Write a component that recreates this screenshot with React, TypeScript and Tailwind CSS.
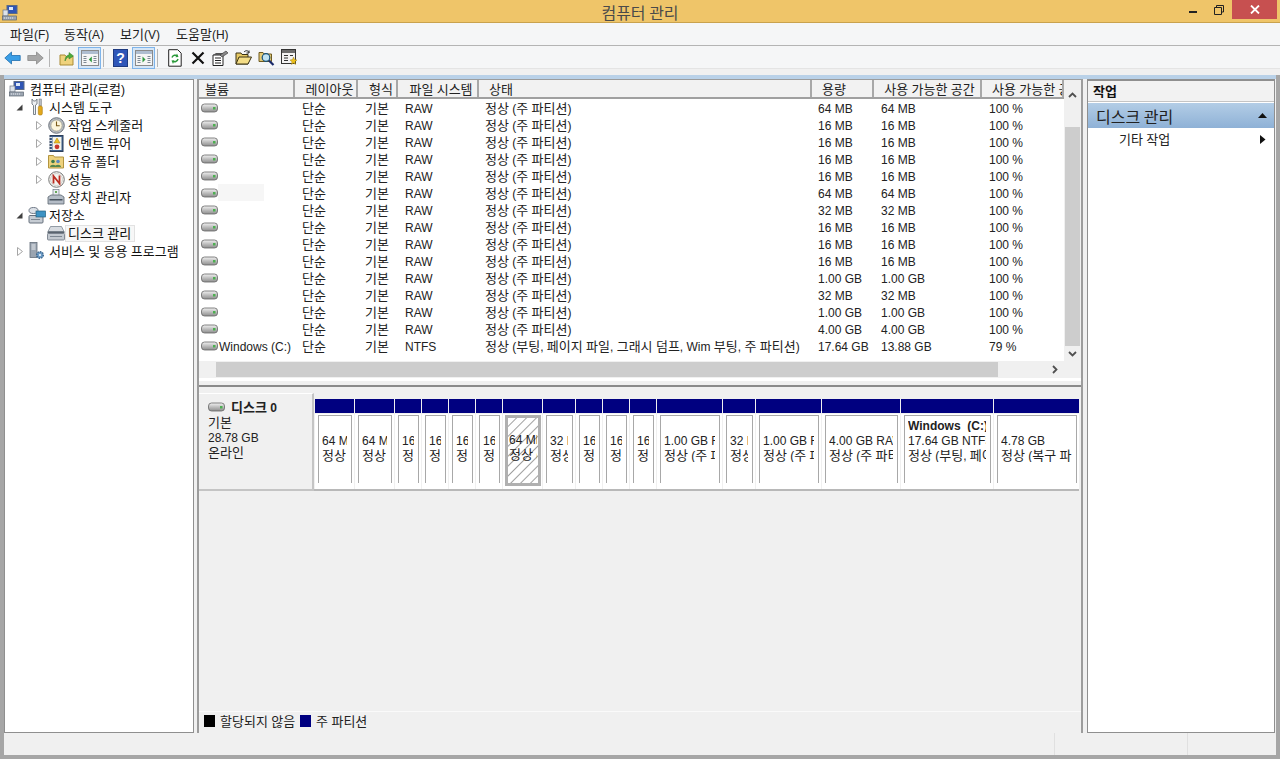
import React from "react";

const FONT = "font-['Liberation_Sans','Noto_Sans_CJK_KR',sans-serif]";

function T({ s, bold }: { s: string; bold?: boolean }) {
  const parts = s.split(/([\uAC00-\uD7A3]+)/).filter(Boolean);
  return (
    <span className="whitespace-pre">
      {parts.map((p, i) =>
        /[\uAC00-\uD7A3]/.test(p) ? (
          <span key={i} className={"text-[13px] font-['Noto_Sans_CJK_KR',sans-serif] " + (bold ? "font-bold" : "font-normal")}>{p}</span>
        ) : (
          <span key={i} className={"text-[12px] " + (bold ? "font-bold" : "font-normal")}>{p}</span>
        )
      )}
    </span>
  );
}

const Hdd = () => (
  <svg width="17" height="10" viewBox="0 0 17 10" className="shrink-0">
    <defs>
      <linearGradient id="hg" x1="0" y1="0" x2="0" y2="1">
        <stop offset="0" stopColor="#f2f2f2" />
        <stop offset="0.5" stopColor="#bdbdbd" />
        <stop offset="1" stopColor="#8e8e8e" />
      </linearGradient>
    </defs>
    <rect x="0.5" y="1" width="16" height="8" rx="3" fill="url(#hg)" stroke="#666" strokeWidth="0.8" />
    <rect x="12" y="4" width="2.5" height="2.5" fill="#4caf50" />
  </svg>
);

const Mmc = () => (
  <svg width="16" height="16" viewBox="0 0 16 16" className="shrink-0">
    <rect x="5" y="0.5" width="10" height="8" fill="#2f55b5" stroke="#5b6b85" />
    <rect x="7" y="2" width="4" height="3" fill="#dbe8fa" />
    <rect x="1" y="5" width="5" height="6" fill="#dde3ea" stroke="#6d7684" strokeWidth="0.7" />
    <rect x="0.5" y="11" width="14" height="4" fill="#9da6b2" stroke="#5b6470" strokeWidth="0.7" />
    <path d="M2 13h10" stroke="#e4e8ee" strokeDasharray="1 1" />
  </svg>
);

const Tools = () => (
  <svg width="16" height="18" viewBox="0 0 16 18" className="shrink-0">
    <path d="M3 1v5l1.500 1.500V16.500h2V7L8 6V1L6.500 3h-2z" fill="#eef1f4" stroke="#6e7780" strokeWidth="0.9" />
    <rect x="10" y="1" width="2.400" height="7" fill="#b8bdc2" stroke="#70757a" strokeWidth="0.5" />
    <rect x="9.300" y="8" width="4" height="9" rx="1.500" fill="#e3a81d" stroke="#a87808" strokeWidth="0.6" />
  </svg>
);

const Clock = () => (
  <svg width="17" height="17" viewBox="0 0 17 17" className="shrink-0">
    <circle cx="8.500" cy="8.500" r="7.800" fill="#b7bcc2" stroke="#6e747c" />
    <circle cx="8.500" cy="8.500" r="5.600" fill="#fdf6dc" stroke="#8d8d80" strokeWidth="0.6" />
    <path d="M8.500 4.500v4.200h3.200" fill="none" stroke="#7a5a18" strokeWidth="1.100" />
  </svg>
);

const EventLog = () => (
  <svg width="16" height="17" viewBox="0 0 16 17" className="shrink-0">
    <rect x="2" y="0.500" width="13" height="16" fill="#40628f" stroke="#2d3f58" />
    <rect x="4.500" y="2" width="9" height="13" fill="#f4f4ea" />
    <path d="M1 2.500h3M1 5.500h3M1 8.500h3M1 11.500h3M1 14.500h3" stroke="#d9dee5" />
    <path d="M9 3l3 5H6z" fill="#f0c020" stroke="#a17d10" strokeWidth="0.5" />
    <circle cx="9" cy="11.800" r="2.400" fill="#c8372d" />
  </svg>
);

const Share = () => (
  <svg width="16" height="16" viewBox="0 0 16 16" className="shrink-0">
    <path d="M0.500 2.500h5l1 1.500h9v11h-15z" fill="#eed27d" stroke="#b39540" />
    <circle cx="5" cy="8.500" r="1.800" fill="#3f7a4a" />
    <circle cx="10" cy="8.500" r="1.800" fill="#5b88c2" />
    <path d="M2 14c0-3 6-3 6 0zM7 14c0-3 6-3 6 0z" fill="#54864f" />
  </svg>
);

const Perf = () => (
  <svg width="17" height="17" viewBox="0 0 17 17" className="shrink-0">
    <circle cx="8.500" cy="8.500" r="7.800" fill="#f3f3ee" stroke="#777" />
    <circle cx="8.500" cy="8.500" r="6" fill="none" stroke="#bbb" strokeWidth="0.6" />
    <path d="M5.500 12.500V5l6 7.500V4.500" fill="none" stroke="#bb2d22" strokeWidth="1.800" />
  </svg>
);

const Device = () => (
  <svg width="18" height="16" viewBox="0 0 18 16" className="shrink-0">
    <rect x="6" y="0.500" width="6" height="6" fill="#e9edf1" stroke="#6f7a86" strokeWidth="0.7" />
    <rect x="8" y="2" width="2" height="2" fill="#67a75a" />
    <path d="M1 8l3-2h10l3 2v7H1z" fill="#b4bcc6" stroke="#5a6470" strokeWidth="0.8" />
    <rect x="2.500" y="10" width="13" height="1.500" fill="#47525e" />
  </svg>
);

const Storage = () => (
  <svg width="18" height="17" viewBox="0 0 18 17" className="shrink-0">
    <ellipse cx="5.500" cy="3.500" rx="4.500" ry="3" fill="#dde2e8" stroke="#6f7986" />
    <rect x="1" y="8.500" width="14" height="7.500" rx="1" fill="#c6ccd3" stroke="#66707c" />
    <rect x="8" y="4" width="9.500" height="6" fill="#3d93c4" stroke="#24607f" strokeWidth="0.7" />
    <path d="M3 12.500h9" stroke="#7d8792" />
  </svg>
);

const DiskMgmt = () => (
  <svg width="18" height="16" viewBox="0 0 18 16" className="shrink-0">
    <path d="M3.500 1.500h11l2.500 5H1z" fill="#d7dbe0" stroke="#7c8792" strokeWidth="0.8" />
    <rect x="0.500" y="6.500" width="17" height="2" fill="#59636e" />
    <rect x="0.500" y="8.500" width="17" height="6.500" rx="1" fill="#c3c9d0" stroke="#6b7480" strokeWidth="0.8" />
    <path d="M3 11.500h12" stroke="#7d8792" />
  </svg>
);

const Services = () => (
  <svg width="16" height="18" viewBox="0 0 16 18" className="shrink-0">
    <rect x="1" y="0.500" width="7" height="15" fill="#9aa4b0" stroke="#646e7a" strokeWidth="0.8" />
    <path d="M2.500 3h4M2.500 5h4M2.500 7h4" stroke="#e8ebef" />
    <circle cx="11" cy="13" r="3.300" fill="#6c9bc6" stroke="#40688d" strokeWidth="1.500" strokeDasharray="1.500 1" />
    <circle cx="11" cy="13" r="1" fill="#fff" />
  </svg>
);

const ToolBtn = ({ active, children }: { active?: boolean; children: React.ReactNode }) => (
  <div className={"flex h-[22px] w-[23px] items-center justify-center " + (active ? "border border-[#7eb4ea] bg-[#d5e6f7]" : "")}>{children}</div>
);

const Sep = () => <div className="ml-[2px] mr-[5px] h-[18px] w-px bg-[#b5b5b5]" />;

const PaneIcon = ({ arrow }: { arrow: "left" | "right" }) => (
  <svg width="18" height="16" viewBox="0 0 18 16">
    <rect x="0.500" y="0.500" width="17" height="15" fill="#f5f5f5" stroke="#8a8a8a" />
    <rect x="1" y="1" width="16" height="3" fill="#aebdd0" />
    <path d="M2.500 6.500h3M2.500 8.500h3M2.500 10.500h3M2.500 12.500h3M12.500 6.500h3M12.500 8.500h3M12.500 10.500h3M12.500 12.500h3" stroke="#7d8894" />
    {arrow === "left" ? <path d="M10.800 6.500v6l-3-3z" fill="#2f9a3e" /> : <path d="M7.500 6.500v6l3-3z" fill="#2f9a3e" />}
  </svg>
);

const Toolbar = () => (
  <div className="flex h-[23px] items-center pl-[1px]">
    <ToolBtn>
      <svg width="17" height="14" viewBox="0 0 17 14">
        <path d="M0.800 7L7.500 1v3.500h8.700v5H7.500V13z" fill="#3a9ee6" stroke="#1f6fae" strokeWidth="0.8" />
      </svg>
    </ToolBtn>
    <ToolBtn>
      <svg width="17" height="14" viewBox="0 0 17 14">
        <path d="M16.200 7L9.500 1v3.500H0.800v5h8.700V13z" fill="#a8a8a8" stroke="#8a8a8a" strokeWidth="0.8" />
      </svg>
    </ToolBtn>
    <Sep />
    <ToolBtn>
      <svg width="16" height="16" viewBox="0 0 16 16">
        <path d="M1 5h5l1 1.500h7V15H1z" fill="#efd27c" stroke="#a98b35" />
        <path d="M6 11c0-4 2-6 4-6V2.500L14.500 6 10 9V7c-2 0-3 2-4 4z" fill="#4dab3c" stroke="#2f7a24" strokeWidth="0.5" />
      </svg>
    </ToolBtn>
    <ToolBtn active><PaneIcon arrow="left" /></ToolBtn>
    <Sep />
    <ToolBtn>
      <svg width="15" height="18" viewBox="0 0 15 18">
        <rect x="0.500" y="0.500" width="14" height="17" fill="#2f56b8" stroke="#1e3a80" />
        <text x="7.500" y="14" textAnchor="middle" fontSize="14" fontWeight="700" fill="#fff" fontFamily="Liberation Sans">?</text>
      </svg>
    </ToolBtn>
    <ToolBtn active><PaneIcon arrow="right" /></ToolBtn>
    <Sep />
    <ToolBtn>
      <svg width="14" height="18" viewBox="0 0 14 18">
        <path d="M0.700 0.700h9l3.500 3.500v13H0.700z" fill="#fff" stroke="#222" />
        <path d="M4 8.500a3.500 3.500 0 0 1 5.500-1.500M10 10a3.500 3.500 0 0 1-5.500 2" fill="none" stroke="#2b9a3a" strokeWidth="1.500" />
        <path d="M9 4.500l1.500 3.500-3 .2zM5 15l-1.500-3.500 3-.2z" fill="#2b9a3a" />
      </svg>
    </ToolBtn>
    <ToolBtn>
      <svg width="14" height="14" viewBox="0 0 14 14"><path d="M1.500 1.500l11 11M12.500 1.500l-11 11" stroke="#111" strokeWidth="2.200" /></svg>
    </ToolBtn>
    <ToolBtn>
      <svg width="17" height="16" viewBox="0 0 17 16">
        <path d="M1 5h10v10.500H1z" fill="#fff" stroke="#222" />
        <path d="M3 8h6M3 10.500h6M3 13h6" stroke="#222" />
        <path d="M1 5l3-2h9l-2 2z" fill="#555" />
        <path d="M8 5l6-4 2 2-6 4z" fill="#888" stroke="#333" strokeWidth="0.6" />
      </svg>
    </ToolBtn>
    <ToolBtn>
      <svg width="17" height="15" viewBox="0 0 17 15">
        <path d="M1 3h5l1 1.500h6V14H1z" fill="#e6c964" stroke="#3b3214" />
        <path d="M1 14l3-7h12.500L13 14z" fill="#f4dd86" stroke="#3b3214" />
        <path d="M9 2c2-2 4-1.500 5 .5M14 .5v2.500h-2.500" fill="none" stroke="#222" />
      </svg>
    </ToolBtn>
    <ToolBtn>
      <svg width="17" height="17" viewBox="0 0 17 17">
        <path d="M1 3.500h4l1 1.500h7.500v7.500H1z" fill="#e4ca76" stroke="#6e5b20" />
        <circle cx="8" cy="8.500" r="3.800" fill="#bfe2f2" stroke="#14507a" strokeWidth="1.200" />
        <path d="M11 11.500l4.500 4.500" stroke="#1a2a6a" strokeWidth="2.200" />
      </svg>
    </ToolBtn>
    <ToolBtn>
      <svg width="17" height="17" viewBox="0 0 17 17">
        <rect x="0.500" y="0.500" width="14" height="14" fill="#f3f3f3" stroke="#333" />
        <rect x="1" y="1" width="13" height="3" fill="#6d6d6d" />
        <path d="M3 6.500h4M3 9h4M3 11.500h4M9 6.500h3" stroke="#333" />
        <path d="M12.500 8l1 2.500 2.500.5-2 1.800.6 2.700-2.100-1.400-2.100 1.400.6-2.700-2-1.800 2.500-.5z" fill="#eec21c" stroke="#8e6f0c" strokeWidth="0.4" />
      </svg>
    </ToolBtn>
  </div>
);

const Expander = ({ state }: { state: "open" | "closed" | "none" }) => (
  <div className="flex w-[9px] shrink-0 items-center justify-center">
    {state === "open" && <svg width="7" height="7" viewBox="0 0 7 7"><path d="M6.500 0.500v6h-6z" fill="#404040" /></svg>}
    {state === "closed" && <svg width="6" height="9" viewBox="0 0 6 9"><path d="M0.500 0.500l5 4-5 4z" fill="#fff" stroke="#a6a6a6" /></svg>}
  </div>
);

function TreeRow({ indent, state, icon, label, selected }: { indent: string; state: "open" | "closed" | "none"; icon: React.ReactNode; label: string; selected?: boolean }) {
  return (
    <div className={"flex h-[18px] items-center whitespace-nowrap " + indent}>
      <Expander state={state} />
      <div className="ml-[4px] flex w-[18px] shrink-0 items-center justify-center">{icon}</div>
      <div className={"flex h-[17px] items-center pl-[2px] pr-[3px] text-[#111] " + (selected ? "border border-[#e2e2e2] bg-[#f7f7f7]" : "border border-transparent")}><T s={label} /></div>
    </div>
  );
}

const headers = [
  { t: "볼륨", w: "w-[96px]", c: "pl-[6px]" },
  { t: "레이아웃", w: "w-[63px]", c: "justify-center pl-[8px]" },
  { t: "형식", w: "w-[40px]", c: "justify-center pl-[8px]" },
  { t: "파일 시스템", w: "w-[81px]", c: "justify-center pl-[7px]" },
  { t: "상태", w: "w-[333px]", c: "pl-[10px]" },
  { t: "용량", w: "w-[62px]", c: "pl-[10px]" },
  { t: "사용 가능한 공간", w: "w-[108px]", c: "justify-center pl-[5px]" },
  { t: "사용 가능한 공간(%)", w: "w-[82px]", c: "pl-[10px]" },
];

const sizes = ["64 MB", "16 MB", "16 MB", "16 MB", "16 MB", "64 MB", "32 MB", "16 MB", "16 MB", "16 MB", "1.00 GB", "32 MB", "1.00 GB", "4.00 GB"];

const parts: { size: string; status: string; name?: string; sel?: boolean }[] = [
  { size: "64 MB", status: "정상 (주 파티션)" },
  { size: "64 MB", status: "정상 (주 파티션)" },
  { size: "16 MB", status: "정상 (주 파티션)" },
  { size: "16 MB", status: "정상 (주 파티션)" },
  { size: "16 MB", status: "정상 (주 파티션)" },
  { size: "16 MB", status: "정상 (주 파티션)" },
  { size: "64 MB", status: "정상 (주 파티션)", sel: true },
  { size: "32 MB", status: "정상 (주 파티션)" },
  { size: "16 MB", status: "정상 (주 파티션)" },
  { size: "16 MB", status: "정상 (주 파티션)" },
  { size: "16 MB", status: "정상 (주 파티션)" },
  { size: "1.00 GB RAW", status: "정상 (주 파티션)" },
  { size: "32 MB", status: "정상 (주 파티션)" },
  { size: "1.00 GB RAW", status: "정상 (주 파티션)" },
  { size: "4.00 GB RAW", status: "정상 (주 파티션)" },
  { size: "17.64 GB NTFS", status: "정상 (부팅, 페이지 파일)", name: "Windows  (C:)" },
  { size: "4.78 GB", status: "정상 (복구 파티션)" },
];

function Row({ vol, mask, fs, status, size, free, pct }: { vol?: string; mask?: boolean; fs: string; status: string; size: string; free: string; pct: string }) {
  return (
    <div className="flex h-[17px] items-center whitespace-nowrap text-[#222]">
      <div className="flex w-[96px] items-center pl-[2px]">
        <Hdd />
        {mask && <div className="h-[17px] w-[46px] bg-[#f6f6f6]" />}
        {vol && <div className="ml-[1px]"><T s={vol} /></div>}
      </div>
      <div className="w-[63px] pl-[7px]"><T s="단순" /></div>
      <div className="w-[40px] pl-[7px]"><T s="기본" /></div>
      <div className="w-[81px] pl-[7px]"><T s={fs} /></div>
      <div className="w-[333px] pl-[6px]"><T s={status} /></div>
      <div className="w-[62px] pl-[6px]"><T s={size} /></div>
      <div className="w-[108px] pl-[7px]"><T s={free} /></div>
      <div className="w-[82px] pl-[7px]"><T s={pct} /></div>
    </div>
  );
}

export default function App() {
  return (
    <div className={"flex h-[759px] w-[1280px] flex-col overflow-hidden bg-[#f0f0f0] " + FONT}>
      <div className="grid h-[23px] grid-cols-[1fr_auto_1fr] border-b border-[#c9a24e] bg-[#efc569]">
        <div className="flex items-center pl-[2px]"><Mmc /></div>
        <div className="flex items-center pb-[2px] text-[16px] text-[#4a4a4a] font-['Noto_Sans_CJK_KR',sans-serif]">컴퓨터 관리</div>
        <div className="flex items-start justify-end pr-[3px]">
          <div className="flex h-[19px] w-[26px] items-center justify-center pt-[5px]"><div className="h-[2px] w-[8px] bg-[#222]" /></div>
          <div className="flex h-[19px] w-[26px] items-center justify-center">
            <svg width="10" height="10" viewBox="0 0 10 10"><path d="M2.500 2.500V0.500h7v6.500H7.500M0.500 2.500h7v7h-7z" fill="none" stroke="#222" /></svg>
          </div>
          <div className="flex h-[19px] w-[45px] items-center justify-center bg-[#c75050]">
            <svg width="10" height="9" viewBox="0 0 10 9"><path d="M1 0.500l8 8M9 0.500l-8 8" stroke="#fff" strokeWidth="1.800" /></svg>
          </div>
        </div>
      </div>

      <div className="flex h-[23px] items-center border-b border-[#b4b4b4] bg-[#f5f6f7] pl-[10px] text-[#222]">
        <div className="w-[54px]"><T s="파일(F)" /></div>
        <div className="w-[56px]"><T s="동작(A)" /></div>
        <div className="w-[56px]"><T s="보기(V)" /></div>
        <div><T s="도움말(H)" /></div>
      </div>

      <div className="h-[23px] border-b border-[#e4e4e4] bg-[#f5f6f7]"><Toolbar /></div>

      <div className="h-[6px] bg-[#f0f0f0]" />

      <div className="flex min-h-0 flex-1 flex-col border-x-4 border-b-4 border-[#a6a6a6]">
        <div className="h-[4px] bg-[#b9d1e8]" />
        <div className="flex min-h-0 flex-1">
          <div className="w-[190px] border border-[#8f8f8f] bg-white pl-[2px]">
            <div className="flex h-[18px] items-center whitespace-nowrap text-[#111]"><div className="ml-[2px]"><Mmc /></div><div className="ml-[5px]"><T s="컴퓨터 관리(로컬)" /></div></div>
            <TreeRow indent="pl-[8px]" state="open" icon={<Tools />} label="시스템 도구" />
            <TreeRow indent="pl-[27px]" state="closed" icon={<Clock />} label="작업 스케줄러" />
            <TreeRow indent="pl-[27px]" state="closed" icon={<EventLog />} label="이벤트 뷰어" />
            <TreeRow indent="pl-[27px]" state="closed" icon={<Share />} label="공유 폴더" />
            <TreeRow indent="pl-[27px]" state="closed" icon={<Perf />} label="성능" />
            <TreeRow indent="pl-[27px]" state="none" icon={<Device />} label="장치 관리자" />
            <TreeRow indent="pl-[8px]" state="open" icon={<Storage />} label="저장소" />
            <TreeRow indent="pl-[27px]" state="none" icon={<DiskMgmt />} label="디스크 관리" selected />
            <TreeRow indent="pl-[8px]" state="closed" icon={<Services />} label="서비스 및 응용 프로그램" />
          </div>

          <div className="ml-[3px] flex w-[886px] flex-col border-x-2 border-t border-[#9c9c9c] bg-[#f0f0f0]">
            <div className="flex h-[301px] flex-col bg-white">
              <div className="flex min-h-0 flex-1">
                <div className="w-[866px] overflow-hidden">
                  <div className="flex h-[19px] w-[866px] overflow-hidden border-b-2 border-[#a0a0a0] bg-[#f2f2f2]">
                    {headers.map((h) => (
                      <div key={h.t} className={"flex shrink-0 items-center overflow-hidden whitespace-nowrap border-r-2 border-[#a8a8a8] text-[#222] " + h.w + " " + h.c}><T s={h.t} /></div>
                    ))}
                  </div>
                  {sizes.map((s, i) => (
                    <Row key={i} fs="RAW" status="정상 (주 파티션)" size={s} free={s} pct="100 %" mask={i === 5} />
                  ))}
                  <Row vol="Windows (C:)" fs="NTFS" status="정상 (부팅, 페이지 파일, 그래시 덤프, Wim 부팅, 주 파티션)" size="17.64 GB" free="13.88 GB" pct="79 %" />
                </div>
                <div className="flex w-[17px] flex-col bg-[#f0f0f0]">
                  <div className="flex h-[27px] items-center justify-center pt-[2px]">
                    <svg width="9" height="6" viewBox="0 0 9 6"><path d="M1 5l3.500-3.500L8 5" fill="none" stroke="#505050" strokeWidth="1.800" /></svg>
                  </div>
                  <div className="mx-px mt-[20px] h-[219px] bg-[#cdcdcd]" />
                  <div className="flex flex-1 items-center justify-center">
                    <svg width="9" height="6" viewBox="0 0 9 6"><path d="M1 1l3.500 3.500L8 1" fill="none" stroke="#505050" strokeWidth="1.800" /></svg>
                  </div>
                </div>
              </div>
              <div className="flex h-[17px] items-center bg-[#f0f0f0]">
                <div className="ml-[17px] h-[15px] w-[782px] bg-[#cdcdcd]" />
                <div className="ml-[54px]">
                  <svg width="6" height="9" viewBox="0 0 6 9"><path d="M1 1l3.500 3.500L1 8" fill="none" stroke="#505050" strokeWidth="1.800" /></svg>
                </div>
              </div>
              <div className="h-[3px] bg-white" />
            </div>
            <div className="h-[4px]" />
            <div className="h-[2px] bg-[#8a8a8a]" />

            <div className="flex min-h-0 flex-1 flex-col">
              <div className="mt-[6px] flex">
                <div className="h-[98px] w-[115px] shrink-0 border-t border-r-2 border-b-2 border-t-white border-r-[#c4c4c4] border-b-[#c4c4c4] bg-[#f0f0f0] pl-[9px] pt-[5px] text-[#222]">
                  <div className="flex h-[15px] items-center gap-[6px]"><Hdd /><T s="디스크 0" bold /></div>
                  <div className="h-[15px] leading-[15px]"><T s="기본" /></div>
                  <div className="h-[15px] leading-[15px]"><T s="28.78 GB" /></div>
                  <div className="h-[15px] leading-[15px]"><T s="온라인" /></div>
                </div>
                <div className="mt-[6px] grid h-[92px] grid-cols-[39px_39px_26px_26px_26px_26px_39px_32px_26px_26px_26px_65px_32px_65px_78px_92px_85px] gap-x-px border-b-2 border-[#b8b8b8] pl-px">
                  {parts.map((p, i) => (
                    <div key={i} className="flex min-w-0 flex-col">
                      <div className="h-[14px] bg-[#000080]" />
                      <div className="mt-[1px] flex min-h-0 flex-1 flex-col bg-white pt-px">
                        <div className={"min-h-0 flex-1 overflow-hidden " + (p.sel ? "ml-[2px] mr-[1px] mb-[3px] border-[3px] border-[#b0b0b0] bg-[repeating-linear-gradient(135deg,#ffffff_0px,#ffffff_5px,#a0a0a0_6px,#ffffff_7px)] pl-px pr-[1px] pt-[13px]" : "ml-[3px] mr-[2px] mb-[6px] border-x border-t border-[#a8a8a8] pl-[3px] pr-[4px] " + (p.name ? "pt-[1px]" : "pt-[16px]"))}>
                          {p.name && <div className="h-[15px] overflow-hidden whitespace-nowrap leading-[15px] text-[#222]"><T s={p.name} bold /></div>}
                          <div className="h-[15px] overflow-hidden whitespace-nowrap leading-[15px] text-[#222]"><T s={p.size} /></div>
                          <div className="h-[15px] overflow-hidden whitespace-nowrap leading-[15px] text-[#222]"><T s={p.status} /></div>
                        </div>
                      </div>
                    </div>
                  ))}
                </div>
              </div>
              <div className="flex-1" />
              <div className="mb-[1px] flex h-[21px] items-center gap-[5px] border-t border-[#fafafa] bg-[#f0f0f0] pb-[3px] pl-[5px] text-[#222]">
                <div className="h-[12px] w-[11px] bg-black" />
                <T s="할당되지 않음" />
                <div className="h-[12px] w-[11px] bg-[#000080]" />
                <T s="주 파티션" />
              </div>
            </div>
          </div>

          <div className="ml-[4px] flex w-[188px] flex-col border-x border-t-2 border-b border-[#8f8f8f] bg-white">
            <div className="flex h-[21px] items-center border-b border-[#c4c4c4] bg-[#f2f2f2] pl-[5px] text-[#111]"><T s="작업" bold /></div>
            <div className="mt-px flex h-[25px] items-center justify-between bg-[linear-gradient(to_bottom,#b3cde6,#8eb1d6)] pl-[8px] pr-[7px] text-[16px] text-[#222] font-['Noto_Sans_CJK_KR',sans-serif]">
              <span>디스크 관리</span>
              <svg width="9" height="5" viewBox="0 0 9 5"><path d="M4.500 0L9 5H0z" fill="#111" /></svg>
            </div>
            <div className="flex h-[22px] items-center justify-between pl-[31px] pr-[8px] text-[#222]">
              <T s="기타 작업" />
              <svg width="6" height="9" viewBox="0 0 6 9"><path d="M0 0l5.500 4.500L0 9z" fill="#111" /></svg>
            </div>
          </div>
        </div>

        <div className="flex h-[22px] bg-[#f0f0f0]">
          <div className="w-[1051px] border-r border-[#e0e0e0]" />
          <div className="w-[133px] border-r border-[#e0e0e0]" />
        </div>
      </div>
    </div>
  );
}
